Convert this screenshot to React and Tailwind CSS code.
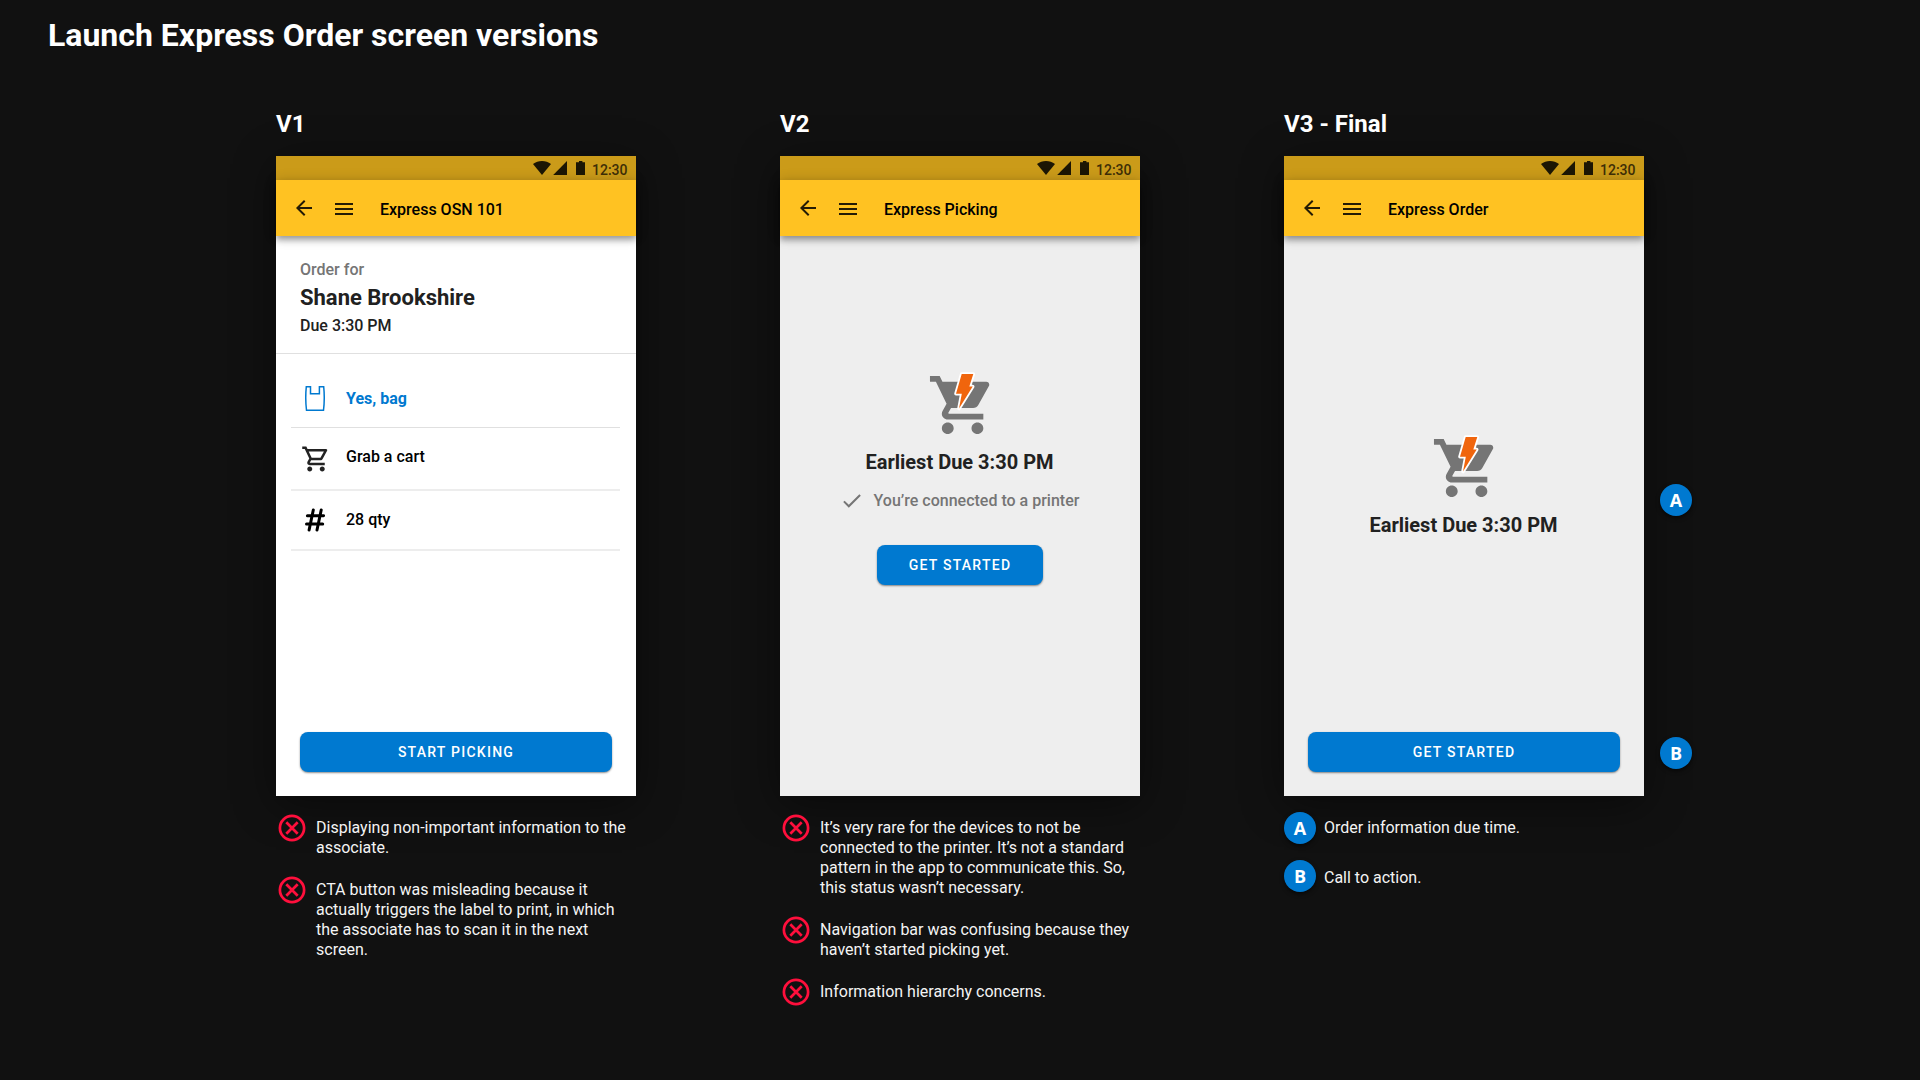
import React from "react";

function StatusBar() {
  return (
    <div className="flex h-6 shrink-0 bg-[#cb9b19] pl-[257px]">
      <svg width="52" height="14" viewBox="0 0 52 14" className="mt-[5px] shrink-0" fill="#1c1604">
        <path d="M0 3.1C2.6 1 5.7 0 9 0s6.400 1 9 3.100L9 14z" />
        <path d="M34 0v14H20.200z" />
        <path d="M43 1.300h3V0h3.400v1.300H52V14h-9z" />
      </svg>
      <span className="ml-[7px] mt-[2px] text-[14px] font-medium leading-6 text-[#3d2e07]">12:30</span>
    </div>
  );
}

function AppBar({ title }) {
  return (
    <div className="z-10 flex h-14 shrink-0 bg-[#ffc222] pl-5 shadow-[0_4px_6px_rgba(0,0,0,0.3),0_1px_12px_rgba(0,0,0,0.2)]">
      <svg width="16" height="16" viewBox="4 4 16 16" className="mt-5 shrink-0" fill="#241b05">
        <path d="M20 11H7.830l5.590-5.590L12 4l-8 8 8 8 1.410-1.410L7.830 13H20v-2z" />
      </svg>
      <svg width="18" height="12" viewBox="0 0 18 12" className="ml-[23px] mt-[23px] shrink-0" fill="#241b05">
        <path d="M0 0h18v2H0zM0 5h18v2H0zM0 10h18v2H0z" />
      </svg>
      <h3 className="ml-[27px] mt-[18px] text-[16px] font-medium leading-6 text-black">{title}</h3>
    </div>
  );
}

function Phone({ title, white, children }) {
  return (
    <div
      className={
        "flex h-[640px] w-[360px] flex-col shadow-[0_8px_40px_rgba(0,0,0,0.45)] " +
        (white ? "bg-white" : "bg-[#eeeeee]")
      }
    >
      <StatusBar />
      <AppBar title={title} />
      {children}
    </div>
  );
}

function Button({ children, wide }) {
  return (
    <button
      className={
        "h-10 shrink-0 rounded-lg bg-[#0079d0] text-[14px] font-medium tracking-[1.25px] text-white shadow-[0_1px_2px_rgba(0,0,0,0.45)] " +
        (wide ? "w-[312px]" : "w-[166px]")
      }
    >
      {children}
    </button>
  );
}

function ExpressCart() {
  return (
    <svg width="71" height="70" viewBox="0 0 71 70" className="ml-[5px] shrink-0">
      <path
        transform="translate(0 0.2) scale(2.965 2.9)"
        fill="#757575"
        d="M7 18c-1.100 0-1.990.9-1.990 2S5.900 22 7 22s2-.9 2-2-.9-2-2-2zM1 2v2h2l3.600 7.590-1.350 2.450c-.16.280-.25.610-.25.960 0 1.100.9 2 2 2h12v-2H7.420c-.14 0-.25-.11-.25-.25l.03-.12.900-1.630h7.450c.75 0 1.410-.41 1.750-1.030l3.580-6.490c.08-.14.12-.31.12-.48 0-.55-.45-1-1-1H5.210l-.94-2H1zm16 16c-1.100 0-1.990.9-1.990 2s.89 2 1.990 2 2-.9 2-2-.9-2-2-2z"
      />
      <path
        d="M34.700 4h11.600l-4 12.600h3.400L32 38.500l2.800-14.700H29z"
        fill="#f0650d"
        stroke="#fff"
        strokeWidth="3.600"
        strokeLinejoin="round"
        paintOrder="stroke"
      />
    </svg>
  );
}

function Bag() {
  return (
    <svg width="20" height="25" viewBox="0 0 20 25" fill="none" stroke="#0079d0" strokeWidth="1.500">
      <path d="M1.300.75h4.200v7h8.900v-7h4.300q1.200 12-.2 23.500H1.500Q.1 12.600 1.300.75z" />
    </svg>
  );
}

function Cart() {
  return (
    <svg width="30" height="30" viewBox="0 0 24 24" fill="#222">
      <path d="M15.550 13c.75 0 1.410-.41 1.750-1.030l3.580-6.490c.37-.66-.11-1.480-.87-1.480H5.210l-.94-2H1v2h2l3.600 7.590-1.350 2.440C4.520 15.370 5.480 17 7 17h12v-2H7l1.100-2h7.450zM6.160 6h12.150l-2.760 5H8.530L6.160 6zM7 18c-1.100 0-1.990.9-1.990 2S5.900 22 7 22s2-.9 2-2-.9-2-2-2zm10 0c-1.100 0-1.990.9-1.990 2s.89 2 1.990 2 2-.9 2-2-.9-2-2-2z" />
    </svg>
  );
}

function Hash() {
  return (
    <svg width="20" height="24" viewBox="0 0 20 24" fill="none" stroke="#000" strokeWidth="3" strokeLinecap="round">
      <path d="M8.300 2L4.100 22M16.200 2L12 22M2.400 7.700h16.200M1.500 16h16.200" />
    </svg>
  );
}

function Row({ icon, label, className, labelClass }) {
  return (
    <div className={"ml-[15px] mr-4 flex shrink-0 " + className}>
      <span className="flex w-[55px] shrink-0 justify-center pr-[7px]">{icon}</span>
      <span className={"text-[16px] leading-6 " + labelClass}>{label}</span>
    </div>
  );
}

function Cross() {
  return (
    <svg width="28" height="28" viewBox="0 0 28 28" className="-mt-[4px] shrink-0" fill="none" stroke="#ff0f3c">
      <circle cx="14" cy="14" r="12.100" strokeWidth="2.700" />
      <path d="M8.300 8.300l11.400 11.400M19.700 8.300L8.300 19.700" strokeWidth="2.700" />
    </svg>
  );
}

function Note({ lines }) {
  return (
    <li className="flex items-start gap-[10px]">
      <Cross />
      <p className="whitespace-nowrap text-[16px] leading-5 text-[#f4f4f4]">
        {lines.map((line) => (
          <span key={line} className="block h-5">
            {line}
          </span>
        ))}
      </p>
    </li>
  );
}

function Notes({ items }) {
  return (
    <ul className="ml-[2px] mt-[22px] flex flex-col gap-[22px]">
      {items.map((lines) => (
        <Note key={lines[0]} lines={lines} />
      ))}
    </ul>
  );
}

function Badge({ children }) {
  return (
    <span className="flex size-8 shrink-0 items-center justify-center rounded-full bg-[#0079d0] font-['Open_Sans'] text-[18px] font-bold leading-6 text-white shadow-[0_2px_4px_rgba(0,0,0,0.6)]">
      {children}
    </span>
  );
}

function Version({ name, children }) {
  return (
    <section className="w-[360px]">
      <h2 className="mb-4 h-8 text-[24px] font-bold leading-8 text-white">{name}</h2>
      {children}
    </section>
  );
}

export default function App() {
  return (
    <main className="h-[1080px] w-[1920px] overflow-hidden bg-[#111111] font-[Roboto,sans-serif]">
      <h1 className="ml-12 pt-[15px] text-[32px] font-bold leading-10 text-white">
        Launch Express Order screen versions
      </h1>
      <div className="ml-[276px] mt-[53px] flex gap-36">
        <Version name="V1">
          <Phone title="Express OSN 101" white>
            <div className="flex h-[118px] shrink-0 flex-col border-b border-[#e0e0e0] pl-6 pt-[22px]">
              <span className="h-[26px] text-[16px] font-medium leading-6 text-[#757575]">Order for</span>
              <span className="h-[30px] text-[22px] font-bold leading-7 text-[#212121]">Shane Brookshire</span>
              <span className="text-[16px] font-medium leading-6 text-[#212121]">Due 3:30 PM</span>
            </div>
            <Row
              icon={<span className="mt-8"><Bag /></span>}
              label="Yes, bag"
              className="h-[74px] border-b border-[#e0e0e0]"
              labelClass="mt-[33px] font-bold text-[#0079d0]"
            />
            <Row
              icon={<span className="mt-4 -mr-[2px]"><Cart /></span>}
              label="Grab a cart"
              className="h-[63px] border-b-2 border-[#ededed]"
              labelClass="mt-[17px] font-medium text-black"
            />
            <Row
              icon={<span className="mt-[17px]"><Hash /></span>}
              label="28 qty"
              className="h-[60px] border-b-2 border-[#ededed]"
              labelClass="mt-[17px] font-medium text-black"
            />
            <div className="mt-auto flex justify-center pb-6">
              <Button wide>START PICKING</Button>
            </div>
          </Phone>
          <Notes
            items={[
              ["Displaying non-important information to the", "associate."],
              [
                "CTA button was misleading because it",
                "actually triggers the label to print, in which",
                "the associate has to scan it in the next",
                "screen.",
              ],
            ]}
          />
        </Version>

        <Version name="V2">
          <Phone title="Express Picking">
            <div className="flex flex-col items-center pt-[134px]">
              <ExpressCart />
              <p className="mt-2 pr-px text-[20px] font-bold leading-7 text-[#212121]">Earliest Due 3:30 PM</p>
              <div className="mt-[13px] flex items-center gap-[13px] pl-[2px]">
                <svg width="18" height="14" viewBox="3.200 5.300 18 14" fill="#757575">
                  <path d="M9 16.170L4.830 12l-1.420 1.410L9 19 21 7l-1.410-1.410z" />
                </svg>
                <span className="text-[16px] font-medium leading-6 text-[#757575]">
                  You’re connected to a printer
                </span>
              </div>
              <div className="mt-8">
                <Button>GET STARTED</Button>
              </div>
            </div>
          </Phone>
          <Notes
            items={[
              [
                "It’s very rare for the devices to not be",
                "connected to the printer. It’s not a standard",
                "pattern in the app to communicate this. So,",
                "this status wasn’t necessary.",
              ],
              ["Navigation bar was confusing because they", "haven’t started picking yet."],
              ["Information hierarchy concerns."],
            ]}
          />
        </Version>

        <div className="flex gap-4">
          <Version name="V3 - Final">
            <Phone title="Express Order">
              <div className="flex flex-col items-center pt-[197px]">
                <ExpressCart />
                <p className="mt-2 pr-px text-[20px] font-bold leading-7 text-[#212121]">Earliest Due 3:30 PM</p>
              </div>
              <div className="mt-auto flex justify-center pb-6">
                <Button wide>GET STARTED</Button>
              </div>
            </Phone>
            <ul className="mt-4 flex flex-col gap-4 text-[16px] leading-5 text-[#f4f4f4]">
              <li className="flex gap-2">
                <Badge>A</Badge>
                <span className="mt-[6px]">Order information due time.</span>
              </li>
              <li className="flex gap-2">
                <Badge>B</Badge>
                <span className="mt-2">Call to action.</span>
              </li>
            </ul>
          </Version>
          <div className="flex flex-col gap-[221px] pt-[376px]">
            <Badge>A</Badge>
            <Badge>B</Badge>
          </div>
        </div>
      </div>
    </main>
  );
}
